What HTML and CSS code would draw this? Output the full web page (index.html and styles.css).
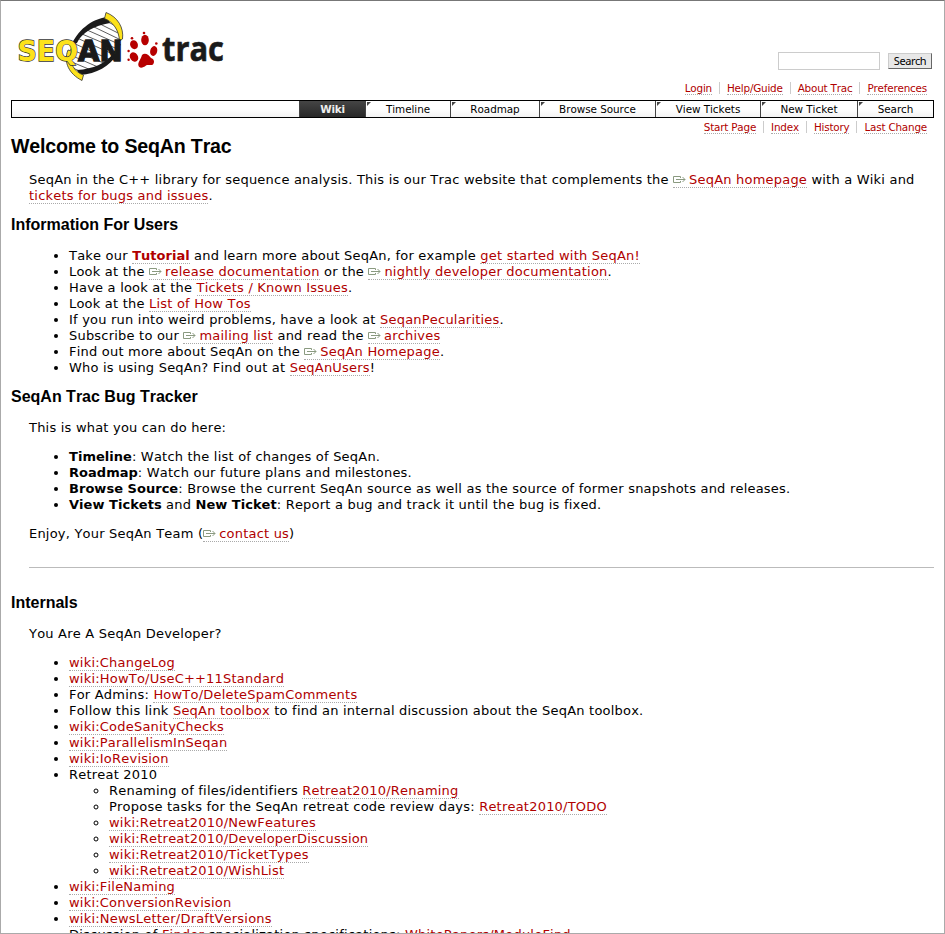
FILE: index.html
```html
<!DOCTYPE html>
<html lang="en">
<head>
<meta charset="utf-8">
<title>SeqAn Trac</title>
<link rel="stylesheet" href="styles.css">
</head>
<body>
<svg class="defs" width="0" height="0" aria-hidden="true">
  <symbol id="ext" viewBox="0 0 13 8">
    <path d="M7.500 2V.5H.5v6h7V5M3 3.500h9M9.500 1l2.500 2.500L9.500 6" fill="none" stroke="#8a9a80" stroke-width="1"/>
  </symbol>
</svg>
<div class="page">
  <header class="banner">
    <a class="logo" href="#">
      <svg width="220" height="76" viewBox="10 8 220 76" role="img" aria-label="SeqAn Trac">
        <path d="M107 18C91 21 77 33 71 48C66 60 69 71 80 74C96 74 112 64 118 53C123 42 121 27 107 18Z" fill="#fff"/>
        <path d="M104 20l14 7M98 23l22 11M92 26l29 14M87 30l34 15M82 34l38 16M77 38l38 17M73 43l38 17M70 49l36 15M68 54l30 13M67 60l24 10M68 66l14 6" stroke="#333" stroke-width=".8" fill="none"/>
        <path d="M107 17C91 19 77 31 71 46L77 43C82 32 94 26 110 23Z" fill="#1a1a1a"/>
        <path d="M77 70C94 69 105 63 112 55L118 54C109 66 97 74 80 75Z" fill="#1a1a1a"/>
        <path d="M106 12.500C118 17 124 28 122.500 39L119.500 41C119 30 113 22 104.500 18.500Z" fill="#fce21b" stroke="#333" stroke-width=".8"/>
        <path d="M68 50C63 62 69 74 82 80.500L83.500 75C74 72 69 63 71.500 51Z" fill="#fce21b" stroke="#333" stroke-width=".8"/>
        <text class="logo-seq" x="17.500" y="61" textLength="60.500" lengthAdjust="spacingAndGlyphs">SEQ</text>
        <text class="logo-an" x="78" y="61" textLength="44.500" lengthAdjust="spacingAndGlyphs">AN</text>
        <g fill="#b70000">
          <ellipse cx="145" cy="40" rx="3.800" ry="5.300"/>
          <ellipse cx="134" cy="44.700" rx="3.800" ry="4.600" transform="rotate(-25 134 44.700)"/>
          <ellipse cx="153.700" cy="51" rx="3.500" ry="5" transform="rotate(15 153.700 51)"/>
          <ellipse cx="134" cy="57" rx="3.900" ry="5" transform="rotate(-35 134 57)"/>
          <circle cx="144" cy="33" r="1.300"/><circle cx="132" cy="38.200" r="1.300"/>
          <circle cx="156.300" cy="43.500" r="1.300"/><circle cx="128.600" cy="51" r="1.200"/><circle cx="128.600" cy="59.800" r="1.200"/>
          <path d="M142 55C145 52 149 55 151 58C154 59 155 62 153 64.500C151 66 148 64 146 65.500C143 68 139 69 138.300 65C138 62 140.500 60 142 55Z"/>
        </g>
        <text class="logo-trac" x="162" y="61" textLength="62" lengthAdjust="spacingAndGlyphs">trac</text>
      </svg>
    </a>
    <form class="search"><input type="text" aria-label="Search"><button type="button">Search</button></form>
  </header>
  <ul class="metanav">
    <li><a href="#">Login</a></li><li><a href="#">Help/Guide</a></li><li><a href="#">About Trac</a></li><li><a href="#">Preferences</a></li>
  </ul>
  <nav class="mainnav">
    <a class="active w66" href="#">Wiki</a><a class="w85" href="#">Timeline</a><a class="w89" href="#">Roadmap</a><a class="w116" href="#">Browse Source</a><a class="w105" href="#">View Tickets</a><a class="w97" href="#">New Ticket</a><a class="w76" href="#">Search</a>
  </nav>
  <ul class="metanav ctxnav">
    <li><a href="#">Start Page</a></li><li><a href="#">Index</a></li><li><a href="#">History</a></li><li><a href="#">Last Change</a></li>
  </ul>
  <main>
    <h1>Welcome to SeqAn Trac</h1>
    <p>SeqAn in the C++ library for sequence analysis. This is our Trac website that complements the <a href="#"><svg class="ext"><use href="#ext"/></svg>SeqAn homepage</a> with a Wiki and <br><a href="#">tickets for bugs and issues</a>.</p>
    <h2>Information For Users</h2>
    <ul>
      <li>Take our <a href="#"><b>Tutorial</b></a> and learn more about SeqAn, for example <a href="#">get started with SeqAn!</a></li>
      <li>Look at the <a href="#"><svg class="ext"><use href="#ext"/></svg>release documentation</a> or the <a href="#"><svg class="ext"><use href="#ext"/></svg>nightly developer documentation</a>.</li>
      <li>Have a look at the <a href="#">Tickets / Known Issues</a>.</li>
      <li>Look at the <a href="#">List of How Tos</a></li>
      <li>If you run into weird problems, have a look at <a href="#">SeqanPecularities</a>.</li>
      <li>Subscribe to our <a href="#"><svg class="ext"><use href="#ext"/></svg>mailing list</a> and read the <a href="#"><svg class="ext"><use href="#ext"/></svg>archives</a></li>
      <li>Find out more about SeqAn on the <a href="#"><svg class="ext"><use href="#ext"/></svg>SeqAn Homepage</a>.</li>
      <li>Who is using SeqAn? Find out at <a href="#">SeqAnUsers</a>!</li>
    </ul>
    <h2>SeqAn Trac Bug Tracker</h2>
    <p>This is what you can do here:</p>
    <ul>
      <li><b>Timeline</b>: Watch the list of changes of SeqAn.</li>
      <li><b>Roadmap</b>: Watch our future plans and milestones.</li>
      <li><b>Browse Source</b>: Browse the current SeqAn source as well as the source of former snapshots and releases.</li>
      <li><b>View Tickets</b> and <b>New Ticket</b>: Report a bug and track it until the bug is fixed.</li>
    </ul>
    <p>Enjoy, Your SeqAn Team (<a href="#"><svg class="ext"><use href="#ext"/></svg>contact us</a>)</p>
    <hr>
    <h2>Internals</h2>
    <p>You Are A SeqAn Developer?</p>
    <ul>
      <li><a href="#">wiki:ChangeLog</a></li>
      <li><a href="#">wiki:HowTo/UseC++11Standard</a></li>
      <li>For Admins: <a href="#">HowTo/DeleteSpamComments</a></li>
      <li>Follow this link <a href="#">SeqAn toolbox</a> to find an internal discussion about the SeqAn toolbox.</li>
      <li><a href="#">wiki:CodeSanityChecks</a></li>
      <li><a href="#">wiki:ParallelismInSeqan</a></li>
      <li><a href="#">wiki:IoRevision</a></li>
      <li>Retreat 2010
        <ul>
          <li>Renaming of files/identifiers <a href="#">Retreat2010/Renaming</a></li>
          <li>Propose tasks for the SeqAn retreat code review days: <a href="#">Retreat2010/TODO</a></li>
          <li><a href="#">wiki:Retreat2010/NewFeatures</a></li>
          <li><a href="#">wiki:Retreat2010/DeveloperDiscussion</a></li>
          <li><a href="#">wiki:Retreat2010/TicketTypes</a></li>
          <li><a href="#">wiki:Retreat2010/WishList</a></li>
        </ul>
      </li>
      <li><a href="#">wiki:FileNaming</a></li>
      <li><a href="#">wiki:ConversionRevision</a></li>
      <li><a href="#">wiki:NewsLetter/DraftVersions</a></li>
      <li>Discussion of <a href="#">Finder</a> specialization specifications: <a href="#">WhitePapers/ModuleFind</a></li>
    </ul>
  </main>
</div>
</body>
</html>
```
FILE: styles.css
```css
* { box-sizing: border-box; }
body { margin: 0; background: #fff; color: #000; font: 13px/16px Verdana, "DejaVu Sans", sans-serif; font-kerning: none; }
.defs { display: block; }
.page { height: 934px; overflow: hidden; border: 1px solid #aaa; border-top-color: #777; padding: 0 10px; }
a { color: #b00000; text-decoration: none; border-bottom: 1px dotted #aaa; }
.banner { height: 80px; display: flex; justify-content: space-between; }
.logo { border: 0; margin: 7px 0 0 -1px; height: 76px; }
.logo svg { display: block; }
.logo-seq { font: bold 29px "DejaVu Sans", sans-serif; fill: #fce21b; stroke: #333; stroke-width: 1.4px; paint-order: stroke; }
.logo-an { font: bold 29px "DejaVu Sans", sans-serif; fill: #1a1a1a; stroke: #1a1a1a; stroke-width: 1.4px; }
.logo-trac { font: bold 34px "Open Sans", sans-serif; fill: #1a1a1a; stroke: #1a1a1a; stroke-width: .6px; }
.search { display: flex; align-items: flex-start; gap: 8px; padding: 51px 2px 0 0; }
.search input { width: 102px; height: 18px; border: 1px solid #ccc; padding: 0; }
.search button { width: 44px; height: 16px; margin-top: 1px; padding: 0; border: 1px solid #888; border-color: #ccc #666 #666 #ccc; background: #e8e8e8; font: 11px/12px "Lucida Grande", "Noto Sans", sans-serif; letter-spacing: -.4px; color: #000; }
.metanav { display: flex; justify-content: flex-end; list-style: none; margin: 0; padding: 1px 0 0; height: 19px; font-size: 10.400px; line-height: 12px; letter-spacing: -.2px; }
.metanav li { padding: 0 7px; border-left: 1px solid #ccc; height: 12px; }
.metanav li:first-child { border: 0; }
.metanav a { display: block; height: 13px; }
.mainnav { display: flex; justify-content: flex-end; height: 18px; border: 1px solid #000; font-size: 10.400px; line-height: 16px; letter-spacing: -.04px; background: linear-gradient(#fff 50%, #f3f3f3); }
.mainnav a { position: relative; color: #000; border: 0; border-left: 1px solid #444; text-align: center; }
.mainnav a:not(.active)::before { content: ""; position: absolute; left: 1px; top: 1px; border-top: 4px solid #444; border-right: 4px solid transparent; }
.mainnav .active { color: #eee; font-weight: bold; letter-spacing: -.2px; background: linear-gradient(#454545, #282828); }
.w66 { width: 66px; } .w85 { width: 85px; } .w89 { width: 89px; } .w116 { width: 116px; } .w105 { width: 105px; } .w97 { width: 97px; } .w76 { width: 76px; }
.ctxnav { padding-top: 3px; }
main { letter-spacing: .21px; }
main b { letter-spacing: .03px; }
h1, h2 { font-family: "Liberation Sans", Arial, sans-serif; margin: 0; letter-spacing: 0; }
h1 { font-size: 19.600px; line-height: 24px; margin-bottom: 14px; margin-top: -3px; letter-spacing: -.18px; }
h2 { font-size: 16px; line-height: 20px; margin: -2px 0 13px; }
p { margin: 0 0 13px 18px; }
main > ul { margin: 0 0 13px 18px; padding-left: 40px; }
ul ul { margin: 0; padding-left: 40px; }
.ext { width: 13px; height: 8px; margin-right: 3px; vertical-align: 0; }
hr { border: 0; border-top: 1px solid #bbb; margin: 25px 0 27px 18px; }
```
